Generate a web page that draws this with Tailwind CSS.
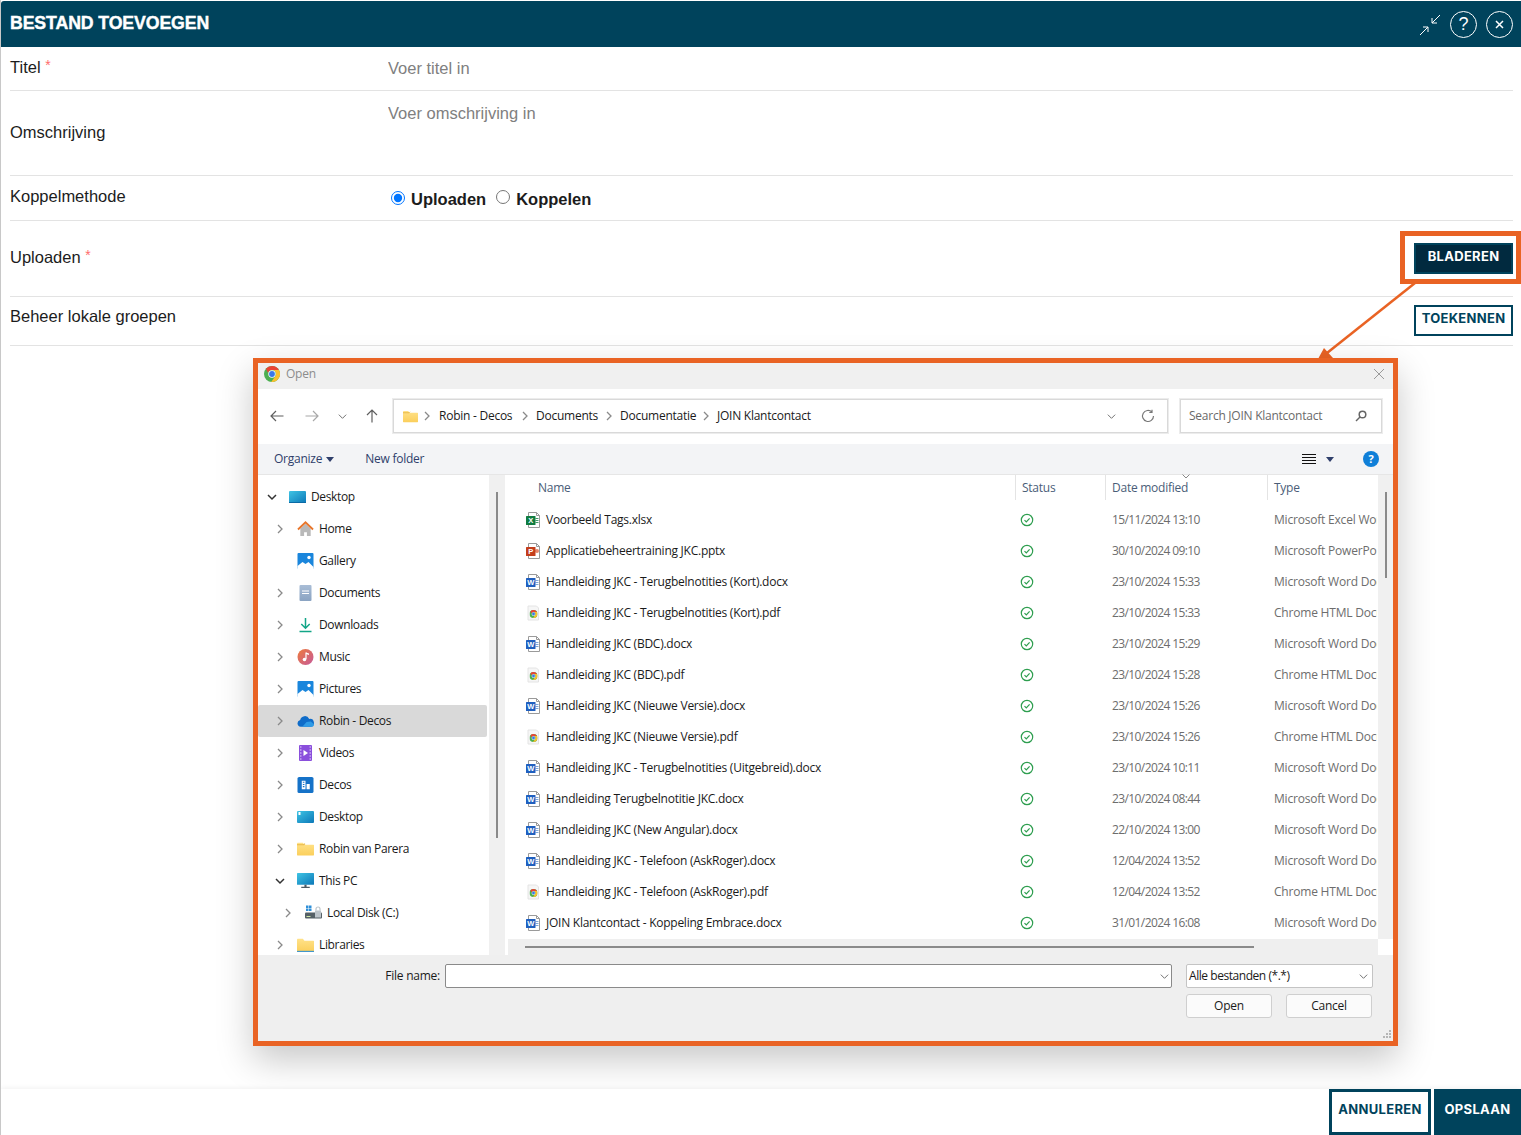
<!DOCTYPE html>
<html lang="nl">
<head>
  <meta charset="UTF-8">
  <title>Bestand toevoegen</title>
  <script src="https://cdn.jsdelivr.net/npm/@tailwindcss/browser@4"></script>
</head>
<body class="bg-white">
  <!-- icon sprite -->
  <svg class="absolute w-0 h-0" aria-hidden="true">
    <defs>
      <linearGradient id="g-desk" x1="0" y1="0" x2="1" y2="1"><stop offset="0" stop-color="#3fc4e4"/><stop offset="1" stop-color="#0c78b8"/></linearGradient>
      <linearGradient id="g-music" x1="0" y1="0" x2="1" y2="1"><stop offset="0" stop-color="#ee7b3c"/><stop offset="1" stop-color="#c65a9a"/></linearGradient>
      <linearGradient id="g-folder" x1="0" y1="0" x2="0" y2="1"><stop offset="0" stop-color="#ffe28a"/><stop offset="1" stop-color="#fbcf5c"/></linearGradient>
      <linearGradient id="g-doc" x1="0" y1="0" x2="0" y2="1"><stop offset="0" stop-color="#a9bdd6"/><stop offset="1" stop-color="#8aa3c2"/></linearGradient>
      <symbol id="chrome" viewBox="0 0 16 16">
        <circle cx="8" cy="8" r="8" fill="#4caf50"/>
        <path d="M8 0a8 8 0 0 1 6.93 4H8a4 4 0 0 0-3.86 3L1.9 2.8A8 8 0 0 1 8 0z" fill="#ea4335"/>
        <path d="M14.93 4A8 8 0 0 1 7.2 15.96L10.9 10.7A4 4 0 0 0 11.5 6 4 4 0 0 0 8 4z" fill="#fbc02d"/>
        <circle cx="8" cy="8" r="3.7" fill="#fff"/><circle cx="8" cy="8" r="2.9" fill="#3b78e7"/>
      </symbol>
      <symbol id="page" viewBox="0 0 16 16">
        <path d="M3.5.5h8l3 3v12h-11z" fill="#fff" stroke="#9a9a9a"/><path d="M11.5.5v3h3" fill="none" stroke="#9a9a9a"/>
      </symbol>
      <symbol id="word" viewBox="0 0 16 16">
        <use href="#page" width="16" height="16"/><path d="M10.500 6.500h3M10.500 8.500h3M10.500 10.500h3" stroke="#7fa6d9"/>
        <rect x="1" y="4" width="9.500" height="9" rx=".5" fill="#1f5fbf"/>
        <text x="5.700" y="11.400" text-anchor="middle" font-family="Liberation Sans" font-weight="700" font-size="7.500" fill="#fff">W</text>
      </symbol>
      <symbol id="excel" viewBox="0 0 16 16">
        <use href="#page" width="16" height="16"/><path d="M10.500 6.500h3M10.500 8.500h3M10.500 10.500h3" stroke="#3f9a68"/>
        <rect x="1" y="4" width="9.500" height="9" rx=".5" fill="#107c41"/>
        <text x="5.700" y="11.400" text-anchor="middle" font-family="Liberation Sans" font-weight="700" font-size="7.500" fill="#fff">X</text>
      </symbol>
      <symbol id="ppt" viewBox="0 0 16 16">
        <use href="#page" width="16" height="16"/><circle cx="12" cy="8" r="2" fill="#e8866a"/>
        <rect x="1" y="4" width="9.500" height="9" rx=".5" fill="#c43e1c"/>
        <text x="5.700" y="11.400" text-anchor="middle" font-family="Liberation Sans" font-weight="700" font-size="7.500" fill="#fff">P</text>
      </symbol>
      <symbol id="pdf" viewBox="0 0 16 16">
        <path d="M3 1h8.500l2 2v12H3z" fill="#f6f6f6" stroke="#e4e4e4"/>
        <use href="#chrome" x="4.500" y="5" width="8" height="8"/>
      </symbol>
      <symbol id="ok" viewBox="0 0 14 14">
        <circle cx="7" cy="7" r="5.700" fill="none" stroke="#2e9e4f" stroke-width="1.200"/>
        <path d="M4.500 7.200l1.800 1.800 3.300-3.600" fill="none" stroke="#2e9e4f" stroke-width="1.200"/>
      </symbol>
      <symbol id="desktop" viewBox="0 0 17 14"><rect y="1" width="17" height="12" rx="1" fill="url(#g-desk)"/><path d="M0 12h17v1H0z" fill="#0b6aa5"/></symbol>
      <symbol id="desktop2" viewBox="0 0 17 14"><rect y="1" width="17" height="12" rx="1" fill="url(#g-desk)"/><rect x="1.500" y="2" width="2" height="3" fill="#fff"/></symbol>
      <symbol id="home" viewBox="0 0 17 17"><path d="M3 8v8h4v-4h3v4h4V8L8.500 3z" fill="#b9b9b9"/><path d="M.5 9L8.500 1.500 16.500 9" fill="none" stroke="#e8762c" stroke-width="2"/></symbol>
      <symbol id="pics" viewBox="0 0 16 16"><rect width="16" height="16" rx="1" fill="#1a86dc"/><circle cx="11.500" cy="4.500" r="1.700" fill="#fff"/><path d="M0 13l5-4 3 2 3-2 5 5v2H0z" fill="#fff"/></symbol>
      <symbol id="docs" viewBox="0 0 13 16"><rect x=".500" width="12" height="16" rx="1" fill="url(#g-doc)"/><path d="M3 6h7M3 8.500h7" stroke="#fff"/></symbol>
      <symbol id="down" viewBox="0 0 16 16"><path d="M8 1v10M3.800 7L8 11.200 12.200 7" fill="none" stroke="#12a587" stroke-width="1.500"/><path d="M2 14.500h12" stroke="#12a587" stroke-width="1.500"/></symbol>
      <symbol id="music" viewBox="0 0 16 16"><circle cx="8" cy="8" r="8" fill="url(#g-music)"/><path d="M8.500 3.500v6.500" stroke="#fff" stroke-width="1.200"/><path d="M8.500 3.500l3 1v1.500l-3-1z" fill="#fff"/><circle cx="7" cy="10.500" r="1.800" fill="#fff"/></symbol>
      <symbol id="cloud" viewBox="0 0 16 11"><path d="M3.500 11A3.300 3.300 0 0 1 3 4.500 4.500 4.500 0 0 1 11.500 3.500 3.800 3.800 0 0 1 12.800 11z" fill="#0f6cc9"/><path d="M5 11l4-4.500 4-.5 3 2.500c0 2-1.500 2.500-3 2.500z" fill="#2f9be6"/></symbol>
      <symbol id="video" viewBox="0 0 13 16"><rect width="13" height="16" rx="1" fill="#8a4fdc"/><path d="M1 2h1.500M1 5h1.500M1 8h1.500M1 11h1.500M1 14h1.500M10.500 2H12M10.500 5H12M10.500 8H12M10.500 11H12M10.500 14H12" stroke="#e6d6fb"/><path d="M4.500 5v6l4.500-3z" fill="#fff"/></symbol>
      <symbol id="decos" viewBox="0 0 15 15"><rect width="15" height="15" rx="1.500" fill="#1572c8"/><path d="M4 3.500h3.500v8H4zM8.500 6.500h3v5h-3z" fill="#fff"/><path d="M5 5h1.500M5 7h1.500M5 9h1.500" stroke="#1572c8"/></symbol>
      <symbol id="folder" viewBox="0 0 16 13"><path d="M0 1.500C0 .9.400.5 1 .5h4.500l1.500 2h8.500c.3 0 .5.200.5.500v9c0 .3-.2.500-.5.500H.500c-.3 0-.5-.2-.5-.5z" fill="url(#g-folder)"/><path d="M0 2.500h6.500l1-1" fill="none" stroke="#e9b949"/></symbol>
      <symbol id="libs" viewBox="0 0 16 13"><path d="M0 1.500C0 .9.400.5 1 .5h4.500l1.500 2h8.500c.3 0 .5.200.5.500v9c0 .3-.2.500-.5.500H.500c-.3 0-.5-.2-.5-.5z" fill="url(#g-folder)"/><path d="M0 12h16v1H0z" fill="#2f8fd0"/></symbol>
      <symbol id="pc" viewBox="0 0 16 15"><rect width="16" height="11" rx=".5" fill="url(#g-desk)"/><path d="M7 11h2v2H7zM4 13h8v1H4z" fill="#4d5a63"/></symbol>
      <symbol id="disk" viewBox="0 0 17 15"><path d="M1 0h2.500v2.500H1zM4 0h2.500v2.500H4zM1 3h2.500v2.500H1zM4 3h2.500v2.500H4z" fill="#2f8fd8"/><rect y="7" width="17" height="6" rx="1" fill="#556066"/><path d="M1.500 11h4" stroke="#cfe8a8"/><rect x="10" y="5" width="6" height="7" fill="#bcc4ca"/><path d="M11 5V3.500a2 2 0 0 1 4 0V5" fill="none" stroke="#bcc4ca" stroke-width="1.200"/></symbol>
      <symbol id="chev-r" viewBox="0 0 12 12"><path d="M4 2l4 4-4 4" fill="none" stroke="#8a8a8a" stroke-width="1.300"/></symbol>
      <symbol id="chev-d" viewBox="0 0 12 12"><path d="M2 4l4 4 4-4" fill="none" stroke="#333" stroke-width="1.500"/></symbol>
      <symbol id="chev-thin" viewBox="0 0 12 12"><path d="M2 4l4 4 4-4" fill="none" stroke="#666" stroke-width="1"/></symbol>
    </defs>
  </svg>

  <div class="relative h-[1135px] overflow-hidden flex flex-col pt-px border-l border-[#c8c8c8] font-['Liberation_Sans',Arial,sans-serif] text-[16.500px] text-[#1c1c1c]">
    <!-- header -->
    <header class="h-[46px] shrink-0 bg-[#00435c] flex items-center pl-[9px] pr-[8px] rounded-tl-[3px] text-white">
      <h1 class="text-[17.700px] font-bold tracking-[-0.1px] pb-[2px] [-webkit-text-stroke:0.4px_white]">BESTAND TOEVOEGEN</h1>
      <div class="ml-auto flex items-center">
        <svg class="w-[22px] h-[22px] mt-[2px] ml-[1px]" viewBox="0 0 22 22" fill="none" stroke="#fff" stroke-width="1"><path d="M1 21l8-8M9 13v5M9 13H4M21 1l-8 8M13 9V4M13 9h5"/></svg>
        <div class="ml-[9px] w-[27px] h-[27px] rounded-full border-[1.500px] border-white flex items-center justify-center text-[18px] leading-none">?</div>
        <div class="ml-[9px] w-[27px] h-[27px] rounded-full border-[1.500px] border-white flex items-center justify-center">
          <svg class="w-[9px] h-[9px]" viewBox="0 0 9 9" stroke="#fff" stroke-width="1.500"><path d="M1 1l7 7M8 1L1 8"/></svg>
        </div>
      </div>
    </header>

    <!-- form -->
    <main class="flex-1 pl-[9px] pr-[8px]">
      <div class="h-[44px] flex border-b border-[#e3e3e3]">
        <div class="w-[378px] pt-[8px]">Titel <span class="text-[#ff6b6b] text-[14px] align-[3px]">*</span></div>
        <input class="flex-1 mt-[10px] h-[22px] outline-none bg-transparent placeholder:text-[#808080]" placeholder="Voer titel in">
      </div>
      <div class="h-[85px] flex border-b border-[#e3e3e3]">
        <div class="w-[378px] pt-[29px]">Omschrijving</div>
        <textarea class="flex-1 mt-[10px] h-[60px] resize-none outline-none bg-transparent placeholder:text-[#808080]" placeholder="Voer omschrijving in"></textarea>
      </div>
      <div class="h-[45px] flex border-b border-[#e3e3e3]">
        <div class="w-[378px] pt-[8px]">Koppelmethode</div>
        <div class="flex items-center font-bold pb-[1px]">
          <input type="radio" name="koppel" checked class="ml-[3px] w-[14px] h-[14px] m-0">
          <span class="ml-[6px] translate-y-[2px]">Uploaden</span>
          <input type="radio" name="koppel" class="ml-[10px] w-[14px] h-[14px] m-0 -mt-[2px]">
          <span class="ml-[6px] translate-y-[2px]">Koppelen</span>
        </div>
      </div>
      <div class="h-[76px] flex border-b border-[#e3e3e3]">
        <div class="w-[378px] pt-[24px]">Uploaden <span class="text-[#ff6b6b] text-[14px] align-[3px]">*</span></div>
        <button class="ml-auto mt-[22px] w-[99px] h-[31px] pb-[3px] bg-[#012a3f] border-2 border-[#00435c] text-white text-[13px] font-bold font-['Inter',sans-serif] tracking-[0.3px]">BLADEREN</button>
      </div>
      <div class="h-[49px] flex border-b border-[#e3e3e3]">
        <div class="w-[378px] pt-[7px]">Beheer lokale groepen</div>
        <button class="ml-auto mt-[8px] w-[99px] h-[31px] pb-[3px] bg-white border-2 border-[#00435c] text-[#00435c] text-[13px] font-bold font-['Inter',sans-serif] tracking-[0.3px]">TOEKENNEN</button>
      </div>
    </main>

    <!-- footer -->
    <footer class="relative z-10 h-[46px] shrink-0 bg-white shadow-[0_-1px_5px_rgba(0,0,0,0.06)] flex justify-end font-['Inter',sans-serif] text-[13px] font-bold">
      <button class="w-[102px] pb-[4px] border-[3px] border-[#00435c] text-[#00435c] tracking-[0.3px]">ANNULEREN</button>
      <button class="ml-[3px] w-[87px] pb-[4px] bg-[#00435c] text-white tracking-[0.3px]">OPSLAAN</button>
    </footer>

    <!-- annotation: highlight + arrow -->
    <div class="absolute left-[1399px] top-[231px] w-[121px] h-[53px] border-[5px] border-[#e96324]"></div>
    <svg class="absolute left-[1298px] top-[280px] w-[130px] h-[85px]" viewBox="1300 280 130 85" fill="none">
      <path d="M1416 283L1328 353" stroke="#e96324" stroke-width="2.500"/>
      <path d="M1319 359l6-11 9 10z" fill="#e96324"/>
    </svg>

    <!-- file dialog -->
    <section class="absolute left-[252px] top-[358px] w-[1145px] h-[688px] border-[5px] border-[#e96324] bg-white shadow-[0_14px_34px_rgba(0,0,0,0.22)] flex flex-col font-['Open_Sans',sans-serif] text-[12px] tracking-[-0.25px] text-[#1a1a1a]">
      <!-- title bar -->
      <div class="h-[26px] shrink-0 bg-[#f0f0f0] flex items-center pl-[6px] pr-[7px] pb-[5px]">
        <svg class="w-4 h-4"><use href="#chrome"/></svg>
        <span class="ml-[6px] text-[#8c8c8c]">Open</span>
        <svg class="ml-auto w-[14px] h-[14px]" viewBox="0 0 14 14" stroke="#9a9a9a"><path d="M2 2l10 10M12 2L2 12"/></svg>
      </div>

      <!-- address row -->
      <div class="h-[55px] shrink-0 flex items-center pb-[1px]">
        <div class="w-[135px] flex items-center pl-[12px]">
          <svg class="w-[14px] h-[14px]" viewBox="0 0 14 14" fill="none" stroke="#5f5f5f" stroke-width="1.200"><path d="M13.500 7H1M6 2L1 7l5 5"/></svg>
          <svg class="ml-[21px] w-[14px] h-[14px]" viewBox="0 0 14 14" fill="none" stroke="#a8a8a8" stroke-width="1.200"><path d="M.5 7H13M8 2l5 5-5 5"/></svg>
          <svg class="ml-[18px] w-[11px] h-[11px]"><use href="#chev-thin"/></svg>
          <svg class="ml-[17px] w-[14px] h-[14px]" viewBox="0 0 14 14" fill="none" stroke="#5f5f5f" stroke-width="1.200"><path d="M7 13.500V1M2 6l5-5 5 5"/></svg>
        </div>
        <div class="w-[775px] h-[34px] border border-[#d9d9d9] outline outline-[#ececec] flex items-center pl-[9px] pr-[12px]">
          <svg class="w-[15px] h-[13px]"><use href="#folder"/></svg>
          <svg class="ml-[3px] w-[12px] h-[12px]"><use href="#chev-r"/></svg>
          <span class="ml-[6px] w-[80px] whitespace-nowrap">Robin - Decos</span>
          <svg class="w-[12px] h-[12px]"><use href="#chev-r"/></svg>
          <span class="ml-[5px] w-[67px]">Documents</span>
          <svg class="w-[12px] h-[12px]"><use href="#chev-r"/></svg>
          <span class="ml-[5px] w-[80px]">Documentatie</span>
          <svg class="w-[12px] h-[12px]"><use href="#chev-r"/></svg>
          <span class="ml-[5px]">JOIN Klantcontact</span>
          <svg class="ml-auto w-[11px] h-[11px]"><use href="#chev-thin"/></svg>
          <svg class="ml-[24px] w-[14px] h-[14px]" viewBox="0 0 14 14" fill="none" stroke="#777" stroke-width="1.200"><path d="M12.500 7a5.500 5.500 0 1 1-1.600-3.900M11 .8v2.700H8.300"/></svg>
        </div>
        <div class="ml-[12px] w-[202px] h-[34px] border border-[#d9d9d9] outline outline-[#ececec] flex items-center pl-[8px] pr-[14px] text-[#6a6a6a]">
          Search JOIN Klantcontact
          <svg class="ml-auto w-[12px] h-[12px]" viewBox="0 0 12 12" fill="none" stroke="#666" stroke-width="1.500"><circle cx="7.500" cy="4.500" r="3.300"/><path d="M5 7l-4 4"/></svg>
        </div>
      </div>

      <!-- command bar -->
      <div class="h-[31px] shrink-0 bg-[#f3f4f6] border-b border-[#e6e6e6] flex items-center pl-[16px] text-[#2f3f6b]">
        <span>Organize</span>
        <svg class="ml-[4px] w-[8px] h-[5px]" viewBox="0 0 8 5" fill="#2f3f6b"><path d="M0 0h8L4 5z"/></svg>
        <span class="ml-[31px]">New folder</span>
        <svg class="ml-auto w-[14px] h-[12px]" viewBox="0 0 14 12" stroke="#111"><path d="M0 1.500h14M0 4.500h14M0 7.500h14M0 10.500h14"/></svg>
        <svg class="ml-[10px] w-[8px] h-[5px]" viewBox="0 0 8 5" fill="#2f3f6b"><path d="M0 0h8L4 5z"/></svg>
        <div class="ml-[29px] mr-[14px] w-4 h-4 rounded-full bg-[#0f7fd8] text-white text-[11px] font-bold flex items-center justify-center">?</div>
      </div>

      <!-- panes -->
      <div class="h-[480px] shrink-0 flex">
        <nav class="w-[231px] overflow-hidden pt-[6px] pr-[2px] tracking-[-0.35px]" id="nav"></nav>
        <div class="relative w-[16px] bg-[#f0f0f0]">
          <div class="absolute left-[7px] top-[17px] w-[2px] h-[346px] bg-[#8a8a8a]"></div>
        </div>
        <div class="relative flex-1 flex flex-col min-w-0">
          <div class="flex-1 pr-[15px]">
            <div class="h-[29px] pb-[4px] flex text-[#4a5d78]">
              <div class="w-[510px] pl-[33px] flex items-center">Name</div>
              <div class="w-[90px] pl-[6px] border-l border-[#e4e4e4] flex items-center">Status</div>
              <div class="relative w-[162px] pl-[6px] border-l border-[#e4e4e4] flex items-center">Date modified
                <svg class="absolute left-[76px] -top-[1px] w-[8px] h-[5px]" viewBox="0 0 8 5" fill="none" stroke="#888"><path d="M.5.500L4 4 7.500.500"/></svg>
              </div>
              <div class="flex-1 pl-[6px] border-l border-[#e4e4e4] flex items-center">Type</div>
            </div>
            <div id="files"></div>
          </div>
          <!-- horizontal scrollbar -->
          <div class="relative h-[16px] ml-[3px] mr-[15px] bg-[#efefef]">
            <div class="absolute left-[17px] top-[7px] w-[729px] h-[2px] bg-[#8a8a8a]"></div>
          </div>
          <!-- vertical scrollbar -->
          <div class="absolute right-0 top-0 bottom-[16px] w-[15px] bg-[#f0f0f0]">
            <div class="absolute left-[7px] top-[17px] w-[2px] h-[86px] bg-[#8a8a8a]"></div>
          </div>
        </div>
      </div>

      <!-- bottom bar -->
      <div class="relative flex-1 bg-[#efefef] pt-[9px]">
        <div class="flex items-center">
          <label class="w-[182px] text-right">File name:</label>
          <div class="ml-[5px] w-[727px] h-[24px] bg-white border border-[#8a8a8a] rounded-[2px] flex items-center justify-end pr-[1px]">
            <svg class="w-[11px] h-[11px]"><use href="#chev-thin"/></svg>
          </div>
          <div class="ml-[14px] w-[187px] h-[24px] bg-white border border-[#c4c4c4] rounded-[2px] flex items-center pl-[2px] pr-[3px] tracking-[-0.45px]">
            Alle bestanden (*.*)
            <svg class="ml-auto w-[11px] h-[11px]"><use href="#chev-thin"/></svg>
          </div>
        </div>
        <div class="flex mt-[6px] ml-[928px]">
          <button class="w-[86px] h-[24px] bg-[#fbfbfb] border border-[#cfcfcf] rounded-[3px]">Open</button>
          <button class="ml-[14px] w-[86px] h-[24px] bg-[#fbfbfb] border border-[#cfcfcf] rounded-[3px]">Cancel</button>
        </div>
        <svg class="absolute right-[1px] bottom-[1px] w-[10px] h-[10px]" viewBox="0 0 10 10" fill="#b5b5b5"><path d="M7 0h2v2H7zM4 3h2v2H4zM7 3h2v2H7zM1 6h2v2H1zM4 6h2v2H4zM7 6h2v2H7z"/></svg>
      </div>
    </section>
  </div>

  <script>
    const navItems = [
      [0, 'open', 'desktop', 'Desktop'], [1, 'closed', 'home', 'Home'], [1, '', 'pics', 'Gallery'],
      [1, 'closed', 'docs', 'Documents'], [1, 'closed', 'down', 'Downloads'], [1, 'closed', 'music', 'Music'],
      [1, 'closed', 'pics', 'Pictures'], [1, 'closed', 'cloud', 'Robin - Decos', true], [1, 'closed', 'video', 'Videos'],
      [1, 'closed', 'decos', 'Decos'], [1, 'closed', 'desktop2', 'Desktop'], [1, 'closed', 'folder', 'Robin van Parera'],
      [1, 'open', 'pc', 'This PC'], [2, 'closed', 'disk', 'Local Disk (C:)'], [1, 'closed', 'libs', 'Libraries']
    ];
    const levelPad = ['pl-[8px]', 'pl-[16px]', 'pl-[24px]'];
    document.getElementById('nav').innerHTML = navItems.map(([level, state, icon, label, selected]) => `
      <div class="h-8 flex items-center ${levelPad[level]} ${selected ? 'bg-[#d9d9d9] rounded-[2px]' : ''}">
        <span class="w-3 h-3 shrink-0">${state ? `<svg class="w-3 h-3"><use href="#${state === 'open' ? 'chev-d' : 'chev-r'}"/></svg>` : ''}</span>
        <span class="ml-[11px] w-[17px] h-[17px] shrink-0 flex items-center justify-center"><svg class="w-[17px] h-[16px]"><use href="#${icon}"/></svg></span>
        <span class="ml-[5px] whitespace-nowrap">${label}</span>
      </div>`).join('');

    const XL = 'Microsoft Excel Worksheet', PP = 'Microsoft PowerPoint Presentation', WD = 'Microsoft Word Document', CH = 'Chrome HTML Document';
    const files = [
      ['excel', 'Voorbeeld Tags.xlsx', '15/11/2024 13:10', XL],
      ['ppt', 'Applicatiebeheertraining JKC.pptx', '30/10/2024 09:10', PP],
      ['word', 'Handleiding JKC - Terugbelnotities (Kort).docx', '23/10/2024 15:33', WD],
      ['pdf', 'Handleiding JKC - Terugbelnotities (Kort).pdf', '23/10/2024 15:33', CH],
      ['word', 'Handleiding JKC (BDC).docx', '23/10/2024 15:29', WD],
      ['pdf', 'Handleiding JKC (BDC).pdf', '23/10/2024 15:28', CH],
      ['word', 'Handleiding JKC (Nieuwe Versie).docx', '23/10/2024 15:26', WD],
      ['pdf', 'Handleiding JKC (Nieuwe Versie).pdf', '23/10/2024 15:26', CH],
      ['word', 'Handleiding JKC - Terugbelnotities (Uitgebreid).docx', '23/10/2024 10:11', WD],
      ['word', 'Handleiding Terugbelnotitie JKC.docx', '23/10/2024 08:44', WD],
      ['word', 'Handleiding JKC (New Angular).docx', '22/10/2024 13:00', WD],
      ['word', 'Handleiding JKC - Telefoon (AskRoger).docx', '12/04/2024 13:52', WD],
      ['pdf', 'Handleiding JKC - Telefoon (AskRoger).pdf', '12/04/2024 13:52', CH],
      ['word', 'JOIN Klantcontact - Koppeling Embrace.docx', '31/01/2024 16:08', WD]
    ];
    document.getElementById('files').innerHTML = files.map(([icon, name, date, type]) => `
      <div class="h-[31px] flex items-center">
        <div class="w-[510px] pl-[20px] flex items-center">
          <svg class="w-4 h-4 shrink-0"><use href="#${icon}"/></svg>
          <span class="ml-[5px]">${name}</span>
        </div>
        <div class="w-[90px] pl-[5px]"><svg class="w-[14px] h-[14px] block"><use href="#ok"/></svg></div>
        <div class="w-[162px] pl-[7px] text-[#6d6d6d] tracking-[-0.6px]">${date}</div>
        <div class="w-[110px] pl-[7px] text-[#6d6d6d] whitespace-nowrap overflow-hidden tracking-[-0.2px]">${type}</div>
      </div>`).join('');
  </script>
</body>
</html>
